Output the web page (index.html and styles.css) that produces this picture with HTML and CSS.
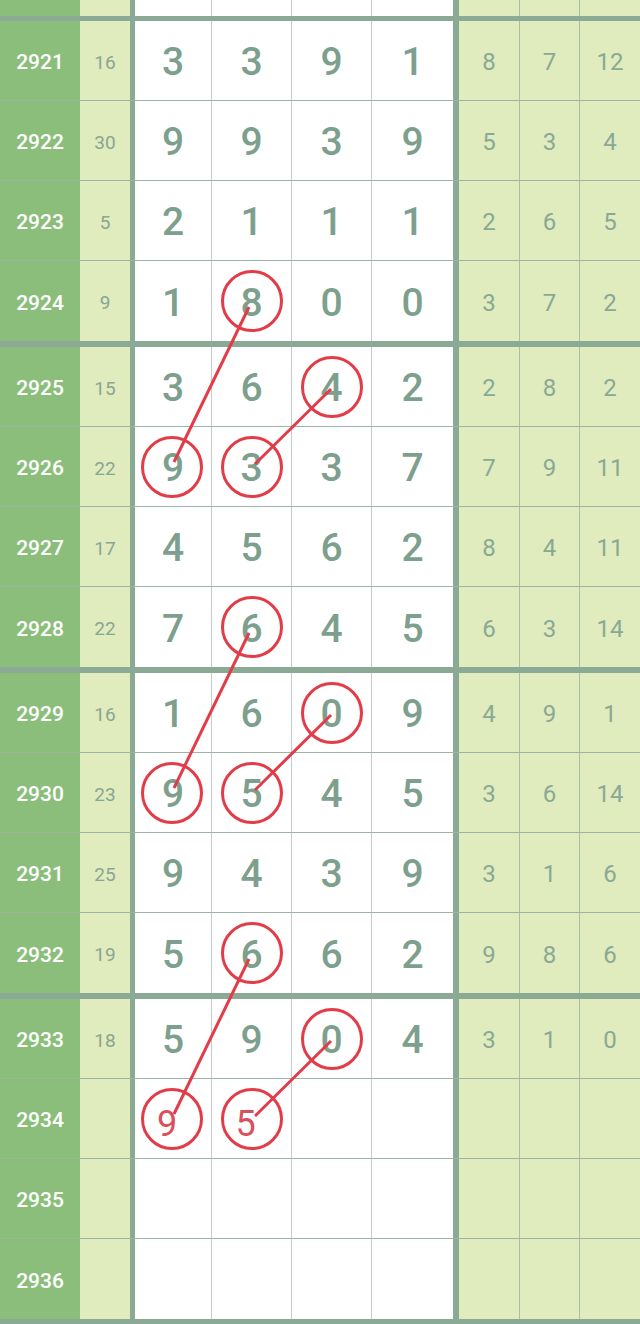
FILE: index.html
```html
<!DOCTYPE html>
<html lang="zh">
<head>
    <meta charset="UTF-8">
    <meta name="viewport" content="width=device-width, initial-scale=1.0">
    <title>走势图</title>
    <link rel="stylesheet" href="styles.css">
</head>
<body>

    <div class="chart">
        <div class="row top">
            <div class="issue"></div><div class="sum"></div>
            <div class="d"></div><div class="d"></div><div class="d"></div><div class="d last"></div>
            <div class="r"></div><div class="r"></div><div class="r end"></div>
        </div>

        <div class="group">
            <div class="row">
                <div class="issue">2921</div><div class="sum">16</div>
                <div class="d">3</div><div class="d">3</div><div class="d">9</div><div class="d last">1</div>
                <div class="r">8</div><div class="r">7</div><div class="r end">12</div>
            </div>
            <div class="row">
                <div class="issue">2922</div><div class="sum">30</div>
                <div class="d">9</div><div class="d">9</div><div class="d">3</div><div class="d last">9</div>
                <div class="r">5</div><div class="r">3</div><div class="r end">4</div>
            </div>
            <div class="row">
                <div class="issue">2923</div><div class="sum">5</div>
                <div class="d">2</div><div class="d">1</div><div class="d">1</div><div class="d last">1</div>
                <div class="r">2</div><div class="r">6</div><div class="r end">5</div>
            </div>
            <div class="row">
                <div class="issue">2924</div><div class="sum">9</div>
                <div class="d">1</div><div class="d">8</div><div class="d">0</div><div class="d last">0</div>
                <div class="r">3</div><div class="r">7</div><div class="r end">2</div>
            </div>
        </div>

        <div class="group">
            <div class="row">
                <div class="issue">2925</div><div class="sum">15</div>
                <div class="d">3</div><div class="d">6</div><div class="d">4</div><div class="d last">2</div>
                <div class="r">2</div><div class="r">8</div><div class="r end">2</div>
            </div>
            <div class="row">
                <div class="issue">2926</div><div class="sum">22</div>
                <div class="d">9</div><div class="d">3</div><div class="d">3</div><div class="d last">7</div>
                <div class="r">7</div><div class="r">9</div><div class="r end">11</div>
            </div>
            <div class="row">
                <div class="issue">2927</div><div class="sum">17</div>
                <div class="d">4</div><div class="d">5</div><div class="d">6</div><div class="d last">2</div>
                <div class="r">8</div><div class="r">4</div><div class="r end">11</div>
            </div>
            <div class="row">
                <div class="issue">2928</div><div class="sum">22</div>
                <div class="d">7</div><div class="d">6</div><div class="d">4</div><div class="d last">5</div>
                <div class="r">6</div><div class="r">3</div><div class="r end">14</div>
            </div>
        </div>

        <div class="group">
            <div class="row">
                <div class="issue">2929</div><div class="sum">16</div>
                <div class="d">1</div><div class="d">6</div><div class="d">0</div><div class="d last">9</div>
                <div class="r">4</div><div class="r">9</div><div class="r end">1</div>
            </div>
            <div class="row">
                <div class="issue">2930</div><div class="sum">23</div>
                <div class="d">9</div><div class="d">5</div><div class="d">4</div><div class="d last">5</div>
                <div class="r">3</div><div class="r">6</div><div class="r end">14</div>
            </div>
            <div class="row">
                <div class="issue">2931</div><div class="sum">25</div>
                <div class="d">9</div><div class="d">4</div><div class="d">3</div><div class="d last">9</div>
                <div class="r">3</div><div class="r">1</div><div class="r end">6</div>
            </div>
            <div class="row">
                <div class="issue">2932</div><div class="sum">19</div>
                <div class="d">5</div><div class="d">6</div><div class="d">6</div><div class="d last">2</div>
                <div class="r">9</div><div class="r">8</div><div class="r end">6</div>
            </div>
        </div>

        <div class="group">
            <div class="row">
                <div class="issue">2933</div><div class="sum">18</div>
                <div class="d">5</div><div class="d">9</div><div class="d">0</div><div class="d last">4</div>
                <div class="r">3</div><div class="r">1</div><div class="r end">0</div>
            </div>
            <div class="row">
                <div class="issue">2934</div><div class="sum"></div>
                <div class="d guess">9</div><div class="d guess">5</div><div class="d"></div><div class="d last"></div>
                <div class="r"></div><div class="r"></div><div class="r end"></div>
            </div>
            <div class="row">
                <div class="issue">2935</div><div class="sum"></div>
                <div class="d"></div><div class="d"></div><div class="d"></div><div class="d last"></div>
                <div class="r"></div><div class="r"></div><div class="r end"></div>
            </div>
            <div class="row">
                <div class="issue">2936</div><div class="sum"></div>
                <div class="d"></div><div class="d"></div><div class="d"></div><div class="d last"></div>
                <div class="r"></div><div class="r"></div><div class="r end"></div>
            </div>
        </div>

        <!-- 红圈和连线 -->
        <svg class="marks" viewBox="0 0 640 1324" xmlns="http://www.w3.org/2000/svg">
            <g fill="none" stroke="#e23c48" stroke-width="3">
                <circle cx="252" cy="301" r="29.5" />
                <circle cx="332" cy="387" r="29.5" />
                <circle cx="172" cy="467" r="29.5" />
                <circle cx="252" cy="467" r="29.5" />
                <line x1="249" y1="307" x2="174" y2="462" />
                <line x1="331" y1="389" x2="255" y2="464" />

                <circle cx="252" cy="627" r="29.5" />
                <circle cx="332" cy="713" r="29.5" />
                <circle cx="172" cy="793" r="29.5" />
                <circle cx="252" cy="793" r="29.5" />
                <line x1="249" y1="633" x2="174" y2="788" />
                <line x1="331" y1="715" x2="255" y2="790" />

                <circle cx="252" cy="953" r="29.5" />
                <circle cx="332" cy="1039" r="29.5" />
                <circle cx="172" cy="1119" r="29.5" />
                <circle cx="252" cy="1119" r="29.5" />
                <line x1="249" y1="959" x2="174" y2="1114" />
                <line x1="331" y1="1041" x2="255" y2="1116" />
            </g>
        </svg>
    </div>

</body>
</html>
```

FILE: styles.css
```css
body {
    margin: 0;
    font-family: Roboto, 'Noto Sans', sans-serif;
    background-color: #fff;
}
.chart {
    position: relative;
    width: 640px;
    height: 1324px;
    overflow: hidden;
}
.group {
    border-bottom: 6px solid #8aaa96;
}
.row {
    display: grid;
    grid-template-columns: 80px 55px 77px 80px 80px 87px 61px 60px 60px;
    height: 80px;
    box-sizing: border-box;
    border-bottom: 1px solid #9db3a4;
}
.group .row:last-child {
    border-bottom: none;
}
.row.top {
    height: 21px;
    border-bottom: 5px solid #8aaa96;
}
.row > div {
    box-sizing: border-box;
    display: flex;
    align-items: center;
    justify-content: center;
    padding-top: 3px;
}
.issue {
    background-color: #8cbe7b;
    color: #fff;
    font-size: 21px;
    font-weight: 500;
}
.sum {
    background-color: #e0ebbe;
    color: #8aa592;
    font-size: 19px;
    border-right: 5px solid #8aaa96;
}
.d {
    color: #7da08e;
    font-size: 39px;
    font-weight: 500;
    border-right: 1px solid #c4ccc8;
}
.d.last {
    border-right: 6px solid #8aaa96;
}
.row > .d.guess {
    color: #d9505b;
    font-weight: 400;
    font-size: 36px;
    padding: 10px 12px 0 0;
}
.r {
    background-color: #e0ebbe;
    color: #89a995;
    font-size: 24px;
    border-right: 1px solid #aabfa2;
}
.r.end {
    border-right: none;
}
.marks {
    position: absolute;
    left: 0;
    top: 0;
    width: 640px;
    height: 1324px;
    pointer-events: none;
}
```
